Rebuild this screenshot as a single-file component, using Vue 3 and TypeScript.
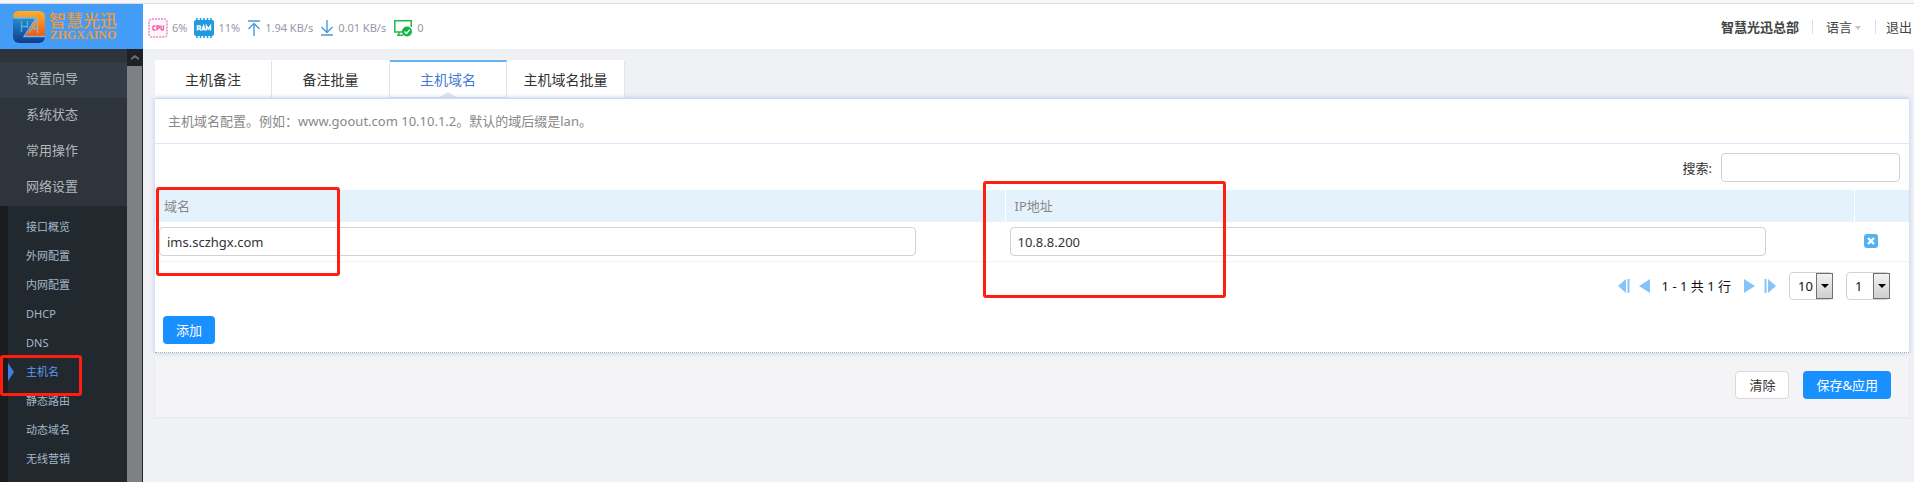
<script setup lang="ts">
import { ref } from 'vue'

interface NavItem {
  label: string
  active?: boolean
}

const mainMenu: NavItem[] = [
  { label: '设置向导', active: true },
  { label: '系统状态' },
  { label: '常用操作' },
  { label: '网络设置' },
]

const subMenu: NavItem[] = [
  { label: '接口概览' },
  { label: '外网配置' },
  { label: '内网配置' },
  { label: 'DHCP' },
  { label: 'DNS' },
  { label: '主机名', active: true },
  { label: '静态路由' },
  { label: '动态域名' },
  { label: '无线营销' },
]

const tabs = ['主机备注', '备注批量', '主机域名', '主机域名批量']
const activeTab = ref('主机域名')

const domain = ref('ims.sczhgx.com')
const ip = ref('10.8.8.200')
const keyword = ref('')
const pageSize = ref('10')
const page = ref('1')
</script>

<template>
  <div class="app">
    <div class="strip"></div>
    <div class="shell">
      <aside class="side">
        <a href="#" class="logo" aria-label="智慧光迅">
          <svg class="mark" viewBox="0 0 32 32" aria-hidden="true">
            <defs>
              <linearGradient id="blue" x1="0" y1="0" x2="0" y2="1">
                <stop offset="0" stop-color="#2ba6e0" />
                <stop offset="1" stop-color="#123a8c" />
              </linearGradient>
              <linearGradient id="orange" x1="0" y1="0" x2="0" y2="1">
                <stop offset="0" stop-color="#fbb02c" />
                <stop offset="1" stop-color="#ef5a14" />
              </linearGradient>
            </defs>
            <rect width="32" height="32" rx="6" fill="url(#blue)" />
            <path d="M6 0H26Q32 0 32 6V25H12L23 7H0V6Q0 0 6 0Z" fill="url(#orange)" />
            <path d="M1 7H23L11 25.500H32" fill="none" stroke="#6fb9ee" stroke-width="1.300" />
            <path d="M8.500 10V21M8.500 15.500H14.500M14.500 10V17" fill="none" stroke="#4fb4ea" stroke-width="1.300" />
            <path d="M16 22L24.500 9V22M20 17.500H24.500" fill="none" stroke="#8fb2c9" stroke-width="1.300" />
          </svg>
          <span class="brand">
            <span class="brand-cn">智慧光迅</span>
            <span class="brand-en">ZHGXAINO</span>
          </span>
        </a>
        <div class="scroll">
          <nav class="nav">
            <ul class="menu">
              <li v-for="m in mainMenu" :key="m.label">
                <a href="#" :class="{ on: m.active }">{{ m.label }}</a>
              </li>
            </ul>
            <ul class="sub">
              <li v-for="s in subMenu" :key="s.label">
                <a href="#" :class="{ on: s.active }">{{ s.label }}</a>
                <span v-if="s.active" class="mark-box mark-nav"></span>
              </li>
            </ul>
          </nav>
          <div class="bar">
            <span class="bar-up">
              <svg viewBox="0 0 8 5" aria-hidden="true"><path d="M0 5V3L4 0L8 3V5L4 2.5Z" fill="#70757b" /></svg>
            </span>
          </div>
        </div>
      </aside>

      <div class="page">
        <header class="top">
          <div class="stats">
            <span class="stat">
              <svg class="ic" viewBox="0 0 20 20" aria-hidden="true">
                <rect x="1" y="1" width="18" height="18" rx="3" fill="#fff6fb" stroke="#f0a5cf" stroke-width="2" stroke-dasharray="2 1" />
                <g fill="none" stroke="#e9559f" stroke-width="1.3">
                  <path d="M7.500 8H6Q4.700 8 4.700 10T6 12H7.500" />
                  <path d="M9 12.600V8H10.500Q11.500 8 11.500 9T10.500 10.300H9" />
                  <path d="M13 7.400V11Q13 12 14.200 12T15.400 11V7.400" />
                </g>
              </svg>
              6%
            </span>
            <span class="stat">
              <svg class="ic" viewBox="0 0 20 20" aria-hidden="true">
                <rect x="0" y="2" width="20" height="16" rx="2" fill="#219bdf" />
                <path d="M3 0V20M6.500 0V20M10 0V20M13.500 0V20M17 0V20" stroke="#219bdf" stroke-width="1.6" />
                <g fill="none" stroke="#fff" stroke-width="1.5">
                  <path d="M3.500 12.500V8H5.500Q6.700 8 6.700 9T5.500 10.400H4M5.500 10.400L7 12.500" />
                  <path d="M8 12.500L9.600 8L11.200 12.500M8.500 11.200H10.700" />
                  <path d="M12.400 12.500V8L14.400 11L16.400 8V12.500" />
                </g>
              </svg>
              11%
            </span>
            <span class="stat">
              <svg class="arrow" viewBox="0 0 14 16" aria-hidden="true">
                <path d="M1 1H13M7 16V4M1.500 9L7 3.500L12.500 9" fill="none" stroke="#4a9ad4" stroke-width="1.4" />
              </svg>
              1.94 KB/s
            </span>
            <span class="stat">
              <svg class="arrow" viewBox="0 0 14 16" aria-hidden="true">
                <path d="M1 15H13M7 0V12M1.500 7L7 12.500L12.500 7" fill="none" stroke="#4a9ad4" stroke-width="1.4" />
              </svg>
              0.01 KB/s
            </span>
            <span class="stat">
              <svg class="ic" viewBox="0 0 20 20" aria-hidden="true">
                <path d="M9 14H1.800V2.800H18.200V9M6 14V16.500M4 17.200H10" fill="none" stroke="#1fb84c" stroke-width="1.5" />
                <circle cx="14" cy="13.500" r="5" fill="#12b441" />
                <path d="M11.500 13.500L13.500 15.500L16.700 11.800" fill="none" stroke="#fff" stroke-width="1.4" />
              </svg>
              0
            </span>
          </div>
          <div class="user">
            <strong>智慧光迅总部</strong>
            <a href="#" class="lang">语言<i class="caret"></i></a>
            <a href="#" class="exit">退出</a>
          </div>
        </header>

        <main class="main">
          <div class="tabs" role="tablist">
            <button
              v-for="t in tabs"
              :key="t"
              type="button"
              role="tab"
              class="tab"
              :class="{ on: t === activeTab }"
              :aria-selected="t === activeTab"
              @click="activeTab = t"
            >
              {{ t }}
              <svg v-if="t === activeTab" class="notch" viewBox="0 0 16 5" aria-hidden="true">
                <path d="M0 5L8 0L16 5Z" fill="#e3e4ea" />
              </svg>
            </button>
          </div>

          <section class="card">
            <p class="desc">主机域名配置。例如：www.goout.com 10.10.1.2。默认的域后缀是lan。</p>
            <div class="search">
              <label for="search">搜索:</label>
              <input id="search" v-model="keyword" type="text" />
            </div>
            <table class="grid">
              <colgroup>
                <col />
                <col />
                <col class="col-op" />
              </colgroup>
              <thead>
                <tr>
                  <th scope="col">域名<span class="mark-box mark-domain"></span></th>
                  <th scope="col">IP地址<span class="mark-box mark-ip"></span></th>
                  <th scope="col" aria-label="删除"></th>
                </tr>
              </thead>
              <tbody>
                <tr>
                  <td><input v-model="domain" type="text" aria-label="域名" /></td>
                  <td><input v-model="ip" type="text" aria-label="IP地址" /></td>
                  <td>
                    <button type="button" class="del" aria-label="删除">
                      <svg viewBox="0 0 14 14" aria-hidden="true">
                        <path d="M4 4L10 10M10 4L4 10" stroke="#fff" stroke-width="2.400" />
                      </svg>
                    </button>
                  </td>
                </tr>
              </tbody>
            </table>
            <div class="pager">
              <button type="button" class="pg" aria-label="首页">
                <svg viewBox="0 0 12 14" aria-hidden="true"><path d="M8 0V14L0 7ZM9.500 0H11.500V14H9.500Z" /></svg>
              </button>
              <button type="button" class="pg" aria-label="上一页">
                <svg viewBox="0 0 12 14" aria-hidden="true"><path d="M11 0V14L0 7Z" /></svg>
              </button>
              <span class="range">1 - 1 共 1 行</span>
              <button type="button" class="pg" aria-label="下一页">
                <svg viewBox="0 0 12 14" aria-hidden="true"><path d="M1 0V14L12 7Z" /></svg>
              </button>
              <button type="button" class="pg" aria-label="末页">
                <svg viewBox="0 0 12 14" aria-hidden="true"><path d="M4 0V14L12 7ZM0.500 0H2.500V14H0.500Z" /></svg>
              </button>
              <span class="pick">
                <select v-model="pageSize" aria-label="每页行数">
                  <option>10</option>
                </select>
                <span class="drop"><i></i></span>
              </span>
              <span class="pick">
                <select v-model="page" aria-label="页码">
                  <option>1</option>
                </select>
                <span class="drop"><i></i></span>
              </span>
            </div>
            <div class="add">
              <button type="button" class="btn primary">添加</button>
            </div>
          </section>

          <div class="foot">
            <button type="button" class="btn plain">清除</button>
            <button type="button" class="btn primary">保存&amp;应用</button>
          </div>
        </main>
      </div>
    </div>
  </div>
</template>

<style>
body {
  margin: 0;
  background: #f0f1f5;
}
</style>

<style scoped>
* {
  box-sizing: border-box;
}
.app {
  display: flex;
  flex-direction: column;
  height: 100vh;
  overflow: hidden;
  color: #333;
  font: 13px/20px "Noto Sans", "Noto Sans CJK SC", sans-serif;
}
a {
  color: inherit;
  text-decoration: none;
}
ul {
  margin: 0;
  padding: 0;
  list-style: none;
}
button,
input,
select {
  font: inherit;
}
button {
  padding: 0;
  border: 0;
  background: none;
  cursor: pointer;
}
.strip {
  flex: none;
  height: 4px;
  background: #f7f7f7;
  border-bottom: 1px solid #dcdcdc;
}
.shell {
  display: flex;
  flex: 1;
  min-height: 0;
}

/* sidebar */
.side {
  display: flex;
  flex: none;
  flex-direction: column;
  width: 143px;
}
.logo {
  display: flex;
  flex: none;
  align-items: center;
  gap: 4px;
  height: 45px;
  padding-left: 13px;
  background: #439df6;
  color: #f0983c;
}
.mark {
  width: 32px;
  height: 32px;
}
.brand {
  display: flex;
  flex-direction: column;
  align-items: center;
  padding-bottom: 2px;
}
.brand-cn {
  font: 500 17px/18px "Noto Sans CJK SC", sans-serif;
}
.brand-en {
  font: 700 12px/12px "Liberation Serif", serif;
}
.scroll {
  display: flex;
  flex: 1;
  min-height: 0;
  background: #20242c;
}
.nav {
  flex: 1;
  overflow: hidden;
  background: #2d343c;
}
.menu {
  padding-top: 13px;
}
.menu a {
  display: block;
  padding: 0 0 4px 26px;
  color: #b3b6ba;
  line-height: 32px;
}
.menu a.on {
  background: #343d45;
}
.sub {
  padding: 8px 0;
  border-left: 8px solid #191d20;
  background: #21282e;
}
.sub li {
  position: relative;
}
.sub a {
  display: block;
  padding: 0 0 3px 18px;
  color: #a5b8cb;
  font-size: 11px;
  line-height: 26px;
}
.sub a.on {
  color: #5c9bf5;
}
.sub a.on::before {
  position: absolute;
  top: 4px;
  left: 0;
  border: solid transparent;
  border-width: 9px 0 9px 6px;
  border-left-color: #3f7fe0;
  content: "";
}
.bar {
  width: 16px;
  border-right: 1px solid #20242c;
  background: #7e8083;
}
.bar-up {
  display: flex;
  align-items: center;
  justify-content: center;
  height: 17px;
  background: #1e2228;
}
.bar-up svg {
  width: 8px;
  height: 5px;
}

/* top bar */
.page {
  display: flex;
  flex: 1;
  flex-direction: column;
  min-width: 0;
}
.top {
  display: flex;
  flex: none;
  align-items: center;
  justify-content: space-between;
  height: 45px;
  padding-left: 5px;
  background: #fff;
}
.stats {
  display: flex;
  align-items: center;
  gap: 7px;
  padding-top: 2px;
  color: #9399a8;
  font-size: 11px;
}
.stat {
  display: flex;
  align-items: center;
  gap: 4px;
}
.ic {
  width: 20px;
  height: 20px;
}
.arrow {
  width: 14px;
  height: 16px;
}
.user {
  display: flex;
  align-items: center;
  color: #444;
  line-height: 14px;
}
.lang,
.exit {
  display: flex;
  align-items: center;
  margin-left: 13px;
  border-left: 1px solid #d5dcea;
}
.lang {
  padding-left: 13px;
}
.exit {
  padding: 0 2px 0 10px;
}
.caret {
  margin: 3px 1px 0 3px;
  border: solid transparent;
  border-width: 4px 3px 0;
  border-top-color: #c4c4c4;
}

/* content */
.main {
  flex: 1;
  padding: 11px 5px 0 12px;
}
.tabs {
  display: flex;
}
.tab {
  position: relative;
  width: 117px;
  height: 38px;
  border-top: 2px solid #fff;
  border-right: 1px solid #e3e4ea;
  background: #fff;
  color: #333;
  font-size: 14px;
}
.tab:nth-child(even) {
  width: 118px;
}
.tab.on {
  border-top-color: #64b3f4;
  border-bottom: 1px solid #e3e4ea;
  color: #4579d8;
}
.notch {
  position: absolute;
  bottom: 0;
  left: calc(50% - 8px);
  width: 16px;
  height: 5px;
}
.card {
  position: relative;
  border-top: 1px solid #cdd9f3;
  border-bottom: 1px dotted #aaa;
  background: #fff;
  box-shadow: 0 0 5px #b4c8f2;
}
.desc {
  margin: 0;
  padding: 12px 13px;
  border-bottom: 1px solid #dde9fb;
  color: #888;
}
.search {
  display: flex;
  align-items: center;
  justify-content: flex-end;
  gap: 9px;
  padding: 9px 9px 8px;
}
input {
  height: 29px;
  padding: 0 7px;
  border: 1px solid #d2d2d2;
  border-radius: 4px;
  background: #fff;
  color: #333;
}
.search input {
  width: 179px;
}
.grid {
  width: 100%;
  border-collapse: separate;
  border-spacing: 0;
  table-layout: fixed;
}
.col-op {
  width: 55px;
}
.grid th {
  position: relative;
  height: 32px;
  padding: 0 9px;
  background: #e4f2fb;
  color: #888;
  font-weight: 400;
  text-align: left;
}
.grid th + th {
  border-left: 1px solid #fff;
}
.grid td {
  height: 40px;
  padding: 0 4px;
  border-bottom: 1px solid #f2f2f2;
}
.grid td + td {
  padding-left: 5px;
}
.grid td input {
  width: 90%;
}
.del {
  display: block;
  margin: 0 0 2px 5px;
  width: 14px;
  height: 14px;
  border-radius: 3px;
  background: #55b0f3;
}
.del svg {
  display: block;
}
.pager {
  display: flex;
  align-items: center;
  justify-content: flex-end;
  gap: 9px;
  padding: 10px 19px 16px;
  color: #111;
}
.pg svg {
  display: block;
  width: 12px;
  height: 14px;
  fill: #86c3fb;
}
.range {
  margin: 0 3px 0 2px;
}
.pick {
  position: relative;
  margin-left: 4px;
}
.pick select {
  display: block;
  width: 44px;
  height: 28px;
  padding: 0 0 0 8px;
  border: 1px solid #d2d2d2;
  border-radius: 4px;
  background: #fff;
  color: #111;
  appearance: none;
}
.drop {
  position: absolute;
  top: 1px;
  right: 0;
  display: flex;
  align-items: center;
  justify-content: center;
  width: 17px;
  height: 26px;
  border: 1px solid #707070;
  background: linear-gradient(#f2f2f2, #cfcfcf);
  pointer-events: none;
}
.drop i {
  border: solid transparent;
  border-width: 4px 4px 0;
  border-top-color: #000;
}
.add {
  padding: 0 8px 8px;
}
.btn {
  height: 28px;
  padding: 0 13px;
  border-radius: 4px;
}
.primary {
  background: #1890ff;
  color: #fff;
}
.plain {
  border: 1px solid #d9d9d9;
  background: #fff;
  color: #333;
}
.foot {
  display: flex;
  justify-content: flex-end;
  gap: 14px;
  padding: 18px;
  background: #f4f4f6;
  box-shadow: 0 1px 2px #e6e7ea;
}

/* highlight frames */
.mark-box {
  position: absolute;
  z-index: 2;
  border: 3px solid #ff1f10;
  border-radius: 3px;
  pointer-events: none;
}
.mark-nav {
  top: -4px;
  left: -8px;
  width: 82px;
  height: 41px;
}
.mark-domain {
  top: -3px;
  left: 1px;
  width: 184px;
  height: 89px;
}
.mark-ip {
  top: -9px;
  left: -23px;
  width: 243px;
  height: 117px;
}
</style>
